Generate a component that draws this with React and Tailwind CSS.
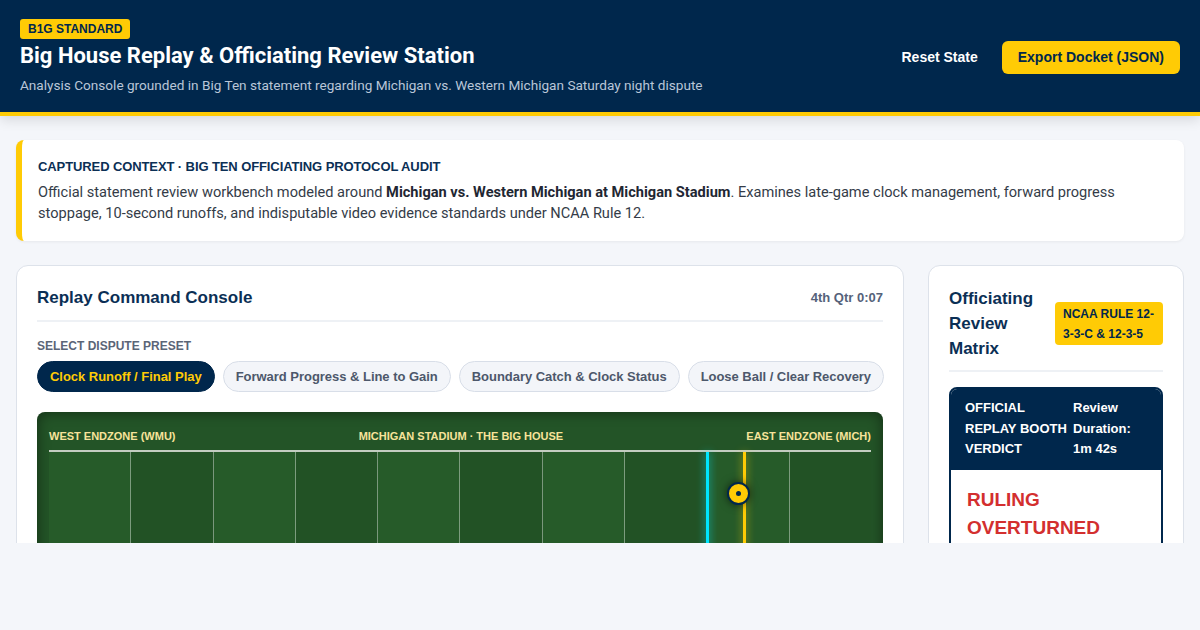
export default function App() {
  const sections = Array.from({ length: 10 }, (_, i) => i);
  return (
    <div className="h-[630px] bg-[#f4f6fa] font-['Liberation_Sans',Arial,sans-serif]">
      <div className="h-[543px] overflow-hidden">
        <header className="relative z-10 flex items-center justify-between bg-[#00274c] px-5 pt-[19px] pb-[17px] border-b-4 border-[#ffcb05] shadow-[0_4px_12px_rgba(0,0,0,0.12)]">
          <div>
            <div className="w-fit rounded-[3px] bg-[#ffcb05] px-2 py-[2px] text-[12px] font-bold leading-4 text-[#00274c]">B1G STANDARD</div>
            <h1 className="mt-[1px] font-['Roboto',Arial,sans-serif] text-[22px] font-bold leading-8 text-white">Big House Replay &amp; Officiating Review Station</h1>
            <p className="mt-[3px] font-['Roboto',Arial,sans-serif] text-[13.6px] leading-5 text-[#b9c6d8]">Analysis Console grounded in Big Ten statement regarding Michigan vs. Western Michigan Saturday night dispute</p>
          </div>
          <div className="flex items-center gap-2">
            <button className="px-4 py-2 text-[14px] font-bold text-white">Reset State</button>
            <button className="rounded-md bg-[#ffcb05] px-4 h-[33px] text-[14px] font-bold text-[#00274c]">Export Docket (JSON)</button>
          </div>
        </header>

        <section className="mx-4 mt-6 rounded-lg border-l-[6px] border-[#ffcb05] bg-white pl-4 pr-5 pt-[19px] pb-[17px] shadow-[0_1px_3px_rgba(0,0,0,0.06)]">
          <h2 className="text-[13px] font-bold leading-4 text-[#0b2f55] tracking-[-0.1px]">CAPTURED CONTEXT · BIG TEN OFFICIATING PROTOCOL AUDIT</h2>
          <p className="mt-[7px] font-['Roboto',Arial,sans-serif] text-[14.6px] leading-[21px] text-[#343c48]">
            Official statement review workbench modeled around <strong className="text-[#1f2733]">Michigan vs. Western Michigan at Michigan Stadium</strong>. Examines late-game clock management, forward progress stoppage, 10-second runoffs, and indisputable video evidence standards under NCAA Rule 12.
          </p>
        </section>

        <div className="mt-6 grid grid-cols-[minmax(0,1fr)_256px] gap-6 px-4">
          <div className="rounded-xl border border-[#dde2ea] bg-white p-5">
            <div className="flex items-center justify-between border-b-2 border-[#eef1f5] pb-[10px]">
              <h3 className="text-[17px] font-bold leading-6 text-[#0b2f55]">Replay Command Console</h3>
              <span className="text-[13px] font-bold text-[#55627a]">4th Qtr 0:07</span>
            </div>
            <div className="mt-4 text-[12px] font-bold leading-4 text-[#5b6577]">SELECT DISPUTE PRESET</div>
            <div className="mt-[7px] flex gap-2 whitespace-nowrap tracking-[-0.03px]">
              <button className="h-[31px] shrink-0 rounded-full border border-[#00274c] bg-[#00274c] px-3 text-[13px] font-bold text-[#ffcb05]">Clock Runoff / Final Play</button>
              <button className="h-[31px] shrink-0 rounded-full border border-[#d8dee8] bg-[#f3f5f9] px-3 text-[13px] font-bold text-[#4d586b]">Forward Progress &amp; Line to Gain</button>
              <button className="h-[31px] shrink-0 rounded-full border border-[#d8dee8] bg-[#f3f5f9] px-3 text-[13px] font-bold text-[#4d586b]">Boundary Catch &amp; Clock Status</button>
              <button className="h-[31px] shrink-0 rounded-full border border-[#d8dee8] bg-[#f3f5f9] px-3 text-[13px] font-bold text-[#4d586b]">Loose Ball / Clear Recovery</button>
            </div>

            <div className="mt-5 rounded-lg bg-[#235427] px-3 pt-4 shadow-[inset_0_0_14px_rgba(0,0,0,0.45)]">
              <div className="flex justify-between text-[11px] font-bold leading-4 text-[#f7e39a]">
                <span>WEST ENDZONE (WMU)</span>
                <span>MICHIGAN STADIUM · THE BIG HOUSE</span>
                <span>EAST ENDZONE (MICH)</span>
              </div>
              <div className="mt-[6px] h-[2px] bg-[#c3cdc1]"></div>
              <div className="relative flex h-[160px]">
                {sections.map((i) => (
                  <div
                    key={i}
                    className={
                      (i % 2 === 0 ? "bg-[#265b29] " : "bg-[#225225] ") +
                      (i < 9 ? "border-r border-[rgba(255,255,255,0.4)] " : "") +
                      "flex-1"
                    }
                  ></div>
                ))}
                <div className="absolute top-0 bottom-0 left-[80%] w-[3px] -ml-[1px] bg-[#00e5ff] shadow-[0_0_8px_rgba(0,229,255,0.8)]"></div>
                <div className="absolute top-0 bottom-0 left-[84.6%] w-[3px] -ml-[1px] bg-[#ffcb05] shadow-[0_0_8px_rgba(255,203,5,0.7)]"></div>
                <div className="absolute top-[30px] left-[83.9%] -ml-[12px] flex h-[23px] w-[23px] items-center justify-center rounded-full border-2 border-[#00274c] bg-[#ffcb05] shadow-[0_0_8px_rgba(0,0,0,0.6)]">
                  <div className="h-[5px] w-[5px] rounded-full bg-[#00274c]"></div>
                </div>
              </div>
            </div>
          </div>

          <div className="rounded-xl border border-[#dde2ea] bg-white p-5">
            <div className="flex items-center justify-between gap-3 border-b-2 border-[#eef1f5] pb-[9px]">
              <h3 className="flex-1 text-[17px] font-bold leading-[25px] text-[#0b2f55]">Officiating Review Matrix</h3>
              <span className="w-[108px] shrink-0 rounded bg-[#ffcb05] px-2 py-[1.5px] text-[12px] font-bold leading-5 text-[#00274c]">NCAA RULE 12-3-3-C &amp; 12-3-5</span>
            </div>
            <div className="mt-[15px] overflow-hidden rounded-lg border-2 border-[#00274c]">
              <div className="grid grid-cols-[108px_1fr] bg-[#00274c] px-[14px] pt-[9px] pb-[10px] text-[13px] font-bold leading-[20.5px] text-white">
                <span>OFFICIAL REPLAY BOOTH VERDICT</span>
                <span>Review Duration: 1m 42s</span>
              </div>
              <div className="bg-white px-4 pt-4 pb-6">
                <div className="text-[19px] font-bold leading-[28px] text-[#d32f2f]">RULING OVERTURNED</div>
                <div className="mt-2 h-[60px]"></div>
              </div>
            </div>
          </div>
        </div>
      </div>
    </div>
  );
}
